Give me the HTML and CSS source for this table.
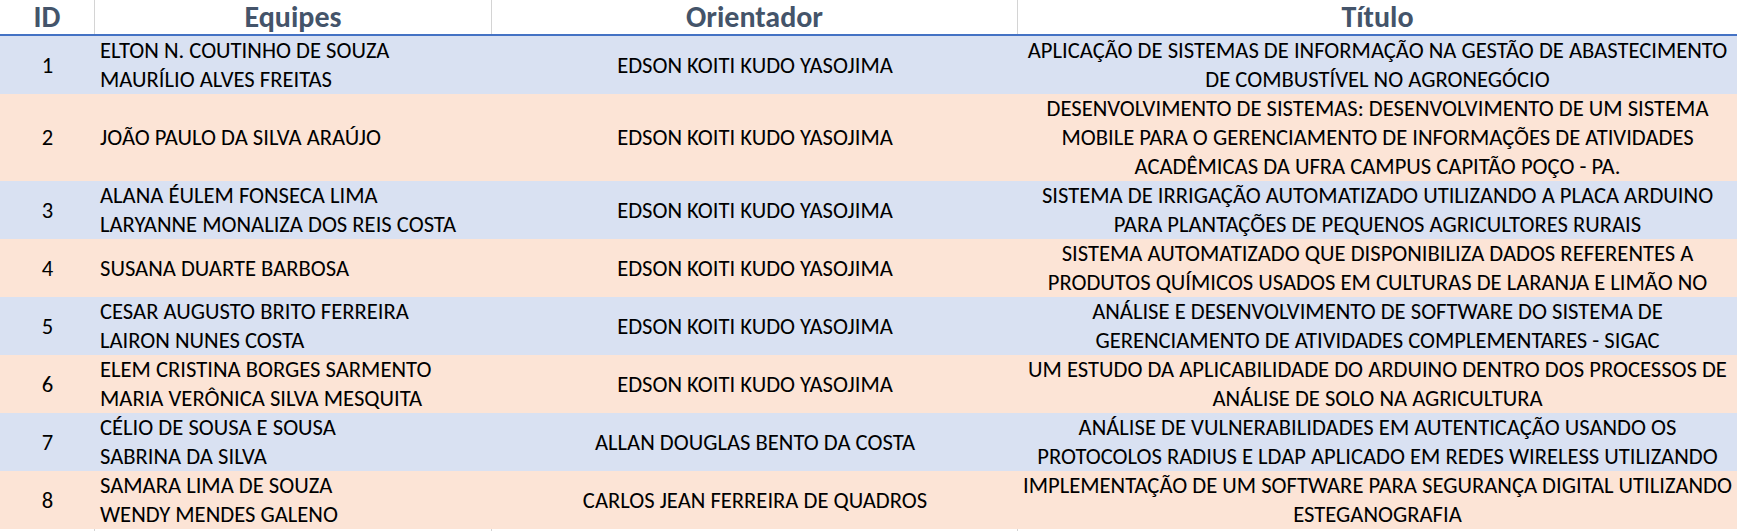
FILE: index.html
```html
<!DOCTYPE html>
<html lang="pt-BR">
<head>
<meta charset="utf-8">
<title>Trabalhos</title>
<link rel="stylesheet" href="styles.css">
</head>
<body>
<div class="sheet">
  <div class="row head">
    <div class="cell c-id">ID</div>
    <div class="cell c-team">Equipes</div>
    <div class="cell c-adv">Orientador</div>
    <div class="cell c-title">Título</div>
  </div>

  <div class="row blue two">
    <div class="cell c-id">1</div>
    <div class="cell c-team"><span>ELTON N. COUTINHO DE SOUZA</span><span>MAURÍLIO ALVES FREITAS</span></div>
    <div class="cell c-adv">EDSON KOITI KUDO YASOJIMA</div>
    <div class="cell c-title"><span>APLICAÇÃO DE SISTEMAS DE INFORMAÇÃO NA GESTÃO DE ABASTECIMENTO</span><span>DE COMBUSTÍVEL NO AGRONEGÓCIO</span></div>
  </div>

  <div class="row peach three">
    <div class="cell c-id">2</div>
    <div class="cell c-team"><span>JOÃO PAULO DA SILVA ARAÚJO</span></div>
    <div class="cell c-adv">EDSON KOITI KUDO YASOJIMA</div>
    <div class="cell c-title"><span>DESENVOLVIMENTO DE SISTEMAS: DESENVOLVIMENTO DE UM SISTEMA</span><span>MOBILE PARA O GERENCIAMENTO DE INFORMAÇÕES DE ATIVIDADES</span><span>ACADÊMICAS DA UFRA CAMPUS CAPITÃO POÇO - PA.</span></div>
  </div>

  <div class="row blue two">
    <div class="cell c-id">3</div>
    <div class="cell c-team"><span>ALANA ÉULEM FONSECA LIMA</span><span>LARYANNE MONALIZA DOS REIS COSTA</span></div>
    <div class="cell c-adv">EDSON KOITI KUDO YASOJIMA</div>
    <div class="cell c-title"><span>SISTEMA DE IRRIGAÇÃO AUTOMATIZADO UTILIZANDO A PLACA ARDUINO</span><span>PARA PLANTAÇÕES DE PEQUENOS AGRICULTORES RURAIS</span></div>
  </div>

  <div class="row peach two">
    <div class="cell c-id">4</div>
    <div class="cell c-team"><span>SUSANA DUARTE BARBOSA</span></div>
    <div class="cell c-adv">EDSON KOITI KUDO YASOJIMA</div>
    <div class="cell c-title"><span>SISTEMA AUTOMATIZADO QUE DISPONIBILIZA DADOS REFERENTES A</span><span>PRODUTOS QUÍMICOS USADOS EM CULTURAS DE LARANJA E LIMÃO NO</span></div>
  </div>

  <div class="row blue two">
    <div class="cell c-id">5</div>
    <div class="cell c-team"><span>CESAR AUGUSTO BRITO FERREIRA</span><span>LAIRON NUNES COSTA</span></div>
    <div class="cell c-adv">EDSON KOITI KUDO YASOJIMA</div>
    <div class="cell c-title"><span>ANÁLISE E DESENVOLVIMENTO DE SOFTWARE DO SISTEMA DE</span><span>GERENCIAMENTO DE ATIVIDADES COMPLEMENTARES - SIGAC</span></div>
  </div>

  <div class="row peach two">
    <div class="cell c-id">6</div>
    <div class="cell c-team"><span>ELEM CRISTINA BORGES SARMENTO</span><span>MARIA VERÔNICA SILVA MESQUITA</span></div>
    <div class="cell c-adv">EDSON KOITI KUDO YASOJIMA</div>
    <div class="cell c-title"><span>UM ESTUDO DA APLICABILIDADE DO ARDUINO DENTRO DOS PROCESSOS DE</span><span>ANÁLISE DE SOLO NA AGRICULTURA</span></div>
  </div>

  <div class="row blue two">
    <div class="cell c-id">7</div>
    <div class="cell c-team"><span>CÉLIO DE SOUSA E SOUSA</span><span>SABRINA DA SILVA</span></div>
    <div class="cell c-adv">ALLAN DOUGLAS BENTO DA COSTA</div>
    <div class="cell c-title"><span>ANÁLISE DE VULNERABILIDADES EM AUTENTICAÇÃO USANDO OS</span><span>PROTOCOLOS RADIUS E LDAP APLICADO EM REDES WIRELESS UTILIZANDO</span></div>
  </div>

  <div class="row peach two">
    <div class="cell c-id">8</div>
    <div class="cell c-team"><span>SAMARA LIMA DE SOUZA</span><span>WENDY MENDES GALENO</span></div>
    <div class="cell c-adv">CARLOS JEAN FERREIRA DE QUADROS</div>
    <div class="cell c-title"><span>IMPLEMENTAÇÃO DE UM SOFTWARE PARA SEGURANÇA DIGITAL UTILIZANDO</span><span>ESTEGANOGRAFIA</span></div>
  </div>

  <div class="row tail">
    <div class="cell c-id"></div>
    <div class="cell c-team"></div>
    <div class="cell c-adv"></div>
    <div class="cell c-title"></div>
  </div>
</div>
</body>
</html>
```

FILE: styles.css
```css
html, body {
  margin: 0;
  padding: 0;
  background: #ffffff;
}

body {
  width: 1737px;
  height: 531px;
  overflow: hidden;
  font-family: "Carlito", "Calibri", "Liberation Sans Narrow", "Open Sans", sans-serif;
  color: #000000;
}

.sheet {
  display: flex;
  flex-direction: column;
}

.row {
  display: grid;
  grid-template-columns: 95px 397px 526px 1fr;
}

.cell {
  display: flex;
  flex-direction: column;
  justify-content: center;
  overflow: hidden;
  white-space: nowrap;
  box-sizing: border-box;
  font-size: 22.6px;
  line-height: 29px;
}

.c-id,
.c-adv,
.c-title {
  align-items: center;
  text-align: center;
}

.c-team {
  align-items: flex-start;
  padding-left: 5px;
}

.head {
  height: 36px;
  border-bottom: 2px solid #4472c4;
  box-sizing: border-box;
}

.head .cell {
  font-weight: 700;
  font-size: 30px;
  line-height: 34px;
  color: #44546a;
  padding-left: 0;
  align-items: center;
  overflow: visible;
}

.head .cell,
.tail .cell {
  border-right: 1px solid #d4d4d4;
}

.head .c-title,
.tail .c-title {
  border-right: none;
}

.two {
  height: 58px;
}

.three {
  height: 87px;
}

.blue {
  background: #d9e1f2;
}

.peach {
  background: #fce4d6;
}

.tail {
  height: 4px;
}
```
